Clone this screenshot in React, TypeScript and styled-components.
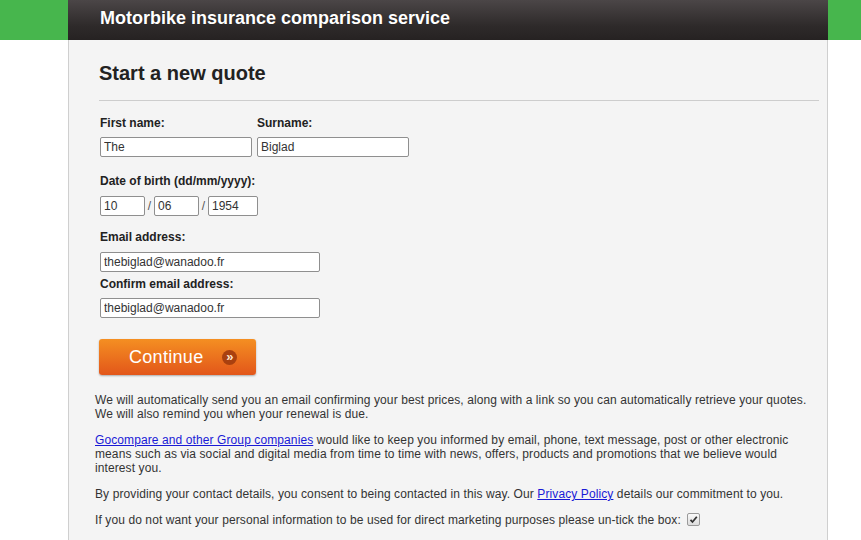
import styled, { createGlobalStyle } from "styled-components";

const GlobalStyle = createGlobalStyle`
  body {
    margin: 0;
    background: #fff;
    font-family: "Liberation Sans", Arial, sans-serif;
    color: #333;
  }
`;

const TopBar = styled.div`
  background: #47b64d;
  height: 40px;
`;
const Header = styled.header`
  margin-left: 68px;
  width: 760px;
  height: 40px;
  box-sizing: border-box;
  padding: 6px 0 0 32px;
  background: linear-gradient(#4b4647 0%, #2e2a2a 65%, #262222 100%);
  color: #fff;
  font-size: 18px;
  font-weight: bold;
  line-height: 24px;
  text-shadow: 0 0 1px rgba(0, 0, 0, 0.4);
`;
const Panel = styled.main`
  margin-left: 68px;
  width: 760px;
  min-height: 500px;
  box-sizing: border-box;
  background: #f4f4f4;
  border-left: 1px solid #cfcfcf;
  border-right: 1px solid #cfcfcf;
  padding: 21px 8px 20px 26px;
`;
const FormArea = styled.section`
  padding-left: 5px;
`;
const Title = styled.h1`
  margin: 0 0 0 -1px;
  font-size: 20px;
  line-height: 24px;
  font-weight: bold;
  color: #222;
`;
const Rule = styled.hr`
  margin: 15px 0 0 -1px;
  width: 720px;
  border: none;
  border-top: 1px solid #cdcdcd;
`;
const Row = styled.div<{ $gap?: number; $top: number }>`
  display: flex;
  gap: ${(p) => p.$gap ?? 5}px;
  margin-top: ${(p) => p.$top}px;
`;
const Field = styled.div<{ $space: number }>`
  display: flex;
  flex-direction: column;
  gap: ${(p) => p.$space}px;
`;
const Label = styled.label`
  font-size: 12px;
  line-height: 14px;
  font-weight: bold;
  color: #222;
`;
const Input = styled.input<{ $w: number }>`
  width: ${(p) => p.$w}px;
  height: 20px;
  box-sizing: border-box;
  margin: 0;
  padding: 0 3px;
  border: 1px solid #8f8f8f;
  border-radius: 2px;
  background: #fff;
  font-family: "Liberation Sans", Arial, sans-serif;
  font-size: 12px;
  color: #333;
`;
const DateRow = styled.div`
  display: flex;
  align-items: center;
`;
const Slash = styled.span`
  width: 9px;
  text-align: center;
  font-size: 12px;
  color: #555;
`;
const ContinueButton = styled.button`
  margin: 21px 0 0 -1px;
  width: 157px;
  height: 36px;
  border: none;
  border-radius: 3px;
  background: linear-gradient(#f48f22, #e2561a);
  box-shadow: 0 1px 2px rgba(0, 0, 0, 0.3);
  color: #fff;
  font-family: "Liberation Sans", Arial, sans-serif;
  font-size: 18px;
  letter-spacing: 0.3px;
  display: flex;
  align-items: center;
  padding: 0 0 0 30px;
  gap: 19px;
  cursor: pointer;
`;
const Chevron = styled.span`
  width: 15px;
  height: 15px;
  border-radius: 50%;
  background: #a9400f;
  color: #fde6cf;
  font-size: 13px;
  font-weight: bold;
  line-height: 14px;
  text-align: center;
  letter-spacing: 0;
`;
const Notes = styled.div`
  margin-top: 18px;
  width: 718px;
  display: flex;
  flex-direction: column;
  gap: 12px;
`;
const Para = styled.p`
  margin: 0;
  font-size: 12px;
  line-height: 14px;
  letter-spacing: 0.1px;
  color: #333;
`;
const Link = styled.a`
  color: #1a1ad6;
  text-decoration: underline;
`;
const Tick = styled.span`
  display: inline-block;
  vertical-align: -2px;
  margin-left: 6px;
  width: 11px;
  height: 11px;
  border: 1px solid #9a9a9a;
  border-radius: 2px;
  background: linear-gradient(#fafafa, #dcdcdc);
  position: relative;
`;

function App() {
  return (
    <>
      <GlobalStyle />
      <TopBar>
        <Header>Motorbike insurance comparison service</Header>
      </TopBar>
      <Panel>
        <FormArea>
          <Title>Start a new quote</Title>
          <Rule />
          <Row $top={15}>
            <Field $space={7}>
              <Label>First name:</Label>
              <Input $w={152} defaultValue="The" />
            </Field>
            <Field $space={7}>
              <Label>Surname:</Label>
              <Input $w={152} defaultValue="Biglad" />
            </Field>
          </Row>
          <Row $top={17}>
            <Field $space={8}>
              <Label>Date of birth (dd/mm/yyyy):</Label>
              <DateRow>
                <Input $w={45} defaultValue="10" />
                <Slash>/</Slash>
                <Input $w={45} defaultValue="06" />
                <Slash>/</Slash>
                <Input $w={50} defaultValue="1954" />
              </DateRow>
            </Field>
          </Row>
          <Row $top={14}>
            <Field $space={8}>
              <Label>Email address:</Label>
              <Input $w={220} defaultValue="thebiglad@wanadoo.fr" />
            </Field>
          </Row>
          <Row $top={5}>
            <Field $space={7}>
              <Label>Confirm email address:</Label>
              <Input $w={220} defaultValue="thebiglad@wanadoo.fr" />
            </Field>
          </Row>
          <ContinueButton>
            Continue <Chevron>»</Chevron>
          </ContinueButton>
        </FormArea>
        <Notes>
          <Para>
            We will automatically send you an email confirming your best prices, along with a link so you can
            automatically retrieve your quotes. We will also remind you when your renewal is due.
          </Para>
          <Para>
            <Link href="#">Gocompare and other Group companies</Link> would like to keep you informed by email,
            phone, text message, post or other electronic means such as via social and digital media from time to
            time with news, offers, products and promotions that we believe would interest you.
          </Para>
          <Para>
            By providing your contact details, you consent to being contacted in this way. Our{" "}
            <Link href="#">Privacy Policy</Link> details our commitment to you.
          </Para>
          <Para>
            If you do not want your personal information to be used for direct marketing purposes please un-tick
            the box:
            <Tick>
              <svg width="11" height="11" viewBox="0 0 11 11" style={{ position: "absolute", left: 0, top: 0 }}>
                <path d="M2.5 5.8 L4.5 8 L8.8 2.8" fill="none" stroke="#333" strokeWidth="1.8" />
              </svg>
            </Tick>
          </Para>
        </Notes>
      </Panel>
    </>
  );
}

export default App;
